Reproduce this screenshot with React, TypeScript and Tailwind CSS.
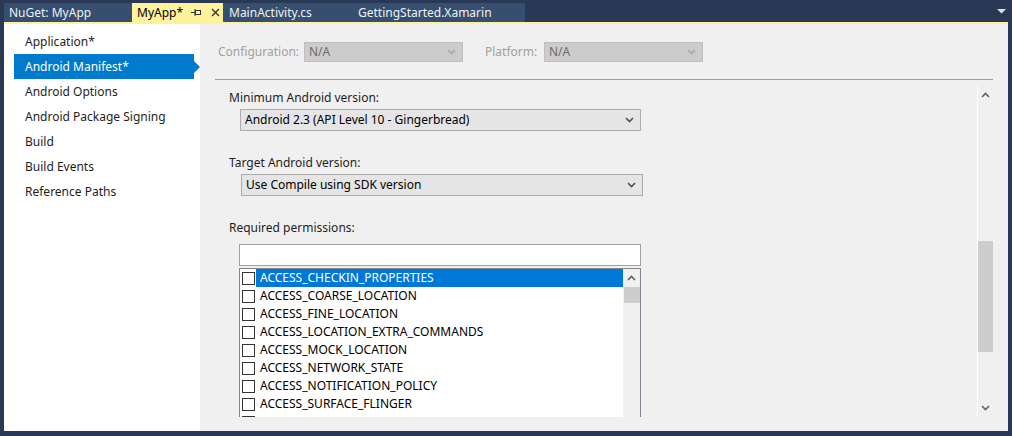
import React from 'react';

const font = { fontFamily: '"Noto Sans", "Liberation Sans", sans-serif' };

const navItems = [
  'Application*',
  'Android Manifest*',
  'Android Options',
  'Android Package Signing',
  'Build',
  'Build Events',
  'Reference Paths',
];

const permissions = [
  'ACCESS_CHECKIN_PROPERTIES',
  'ACCESS_COARSE_LOCATION',
  'ACCESS_FINE_LOCATION',
  'ACCESS_LOCATION_EXTRA_COMMANDS',
  'ACCESS_MOCK_LOCATION',
  'ACCESS_NETWORK_STATE',
  'ACCESS_NOTIFICATION_POLICY',
  'ACCESS_SURFACE_FLINGER',
];

function Chevron({ up = false, color = '#606060' }: { up?: boolean; color?: string }) {
  return (
    <svg width="9" height="6" viewBox="0 0 9 6">
      <path
        d={up ? 'M1 5 L4.5 1.5 L8 5' : 'M1 1 L4.5 4.5 L8 1'}
        fill="none"
        stroke={color}
        strokeWidth="1.6"
      />
    </svg>
  );
}

function Combo({ value, disabled, className }: { value: string; disabled?: boolean; className: string }) {
  return (
    <div
      className={`flex items-center justify-between border pl-[4px] pr-[6px] text-[12px] ${
        disabled ? 'bg-[#cccccc] border-[#bfbfbf] text-[#6d6d6d]' : 'bg-[#e5e5e5] border-[#acacac] text-[#000000]'
      } ${className}`}
    >
      <span>{value}</span>
      <Chevron color={disabled ? '#a8a8a8' : '#505050'} />
    </div>
  );
}

function Tabs() {
  return (
    <div className="h-[22px] flex items-end pl-[4px] pr-[4px] text-[12px]">
      <div className="h-[19px] w-[128px] bg-[#364e6f] text-[#f1f1f1] pl-[5px] leading-[19px]">NuGet: MyApp</div>
      <div className="h-[19px] w-[91px] bg-[#fff29d] text-[#000000] pl-[5px] flex items-center">
        <span className="leading-[19px]">MyApp*</span>
        <svg width="11" height="9" viewBox="0 0 11 9" className="ml-[8px]">
          <path d="M0 4.5 H4 M4 1 V8" stroke="#333" strokeWidth="1" fill="none" />
          <rect x="4.5" y="2.5" width="5" height="4" fill="none" stroke="#333" strokeWidth="1" />
        </svg>
        <svg width="9" height="9" viewBox="0 0 9 9" className="ml-[9px]">
          <path d="M1 1 L8 8 M8 1 L1 8" stroke="#333" strokeWidth="1.3" />
        </svg>
      </div>
      <div className="h-[19px] w-[130px] bg-[#364e6f] text-[#f1f1f1] pl-[6px] leading-[19px]">MainActivity.cs</div>
      <div className="h-[19px] w-[172px] bg-[#364e6f] text-[#f1f1f1] pl-[5px] leading-[19px]">GettingStarted.Xamarin</div>
      <div className="flex-1" />
      <svg width="9" height="5" viewBox="0 0 9 5" className="mb-[8px] mr-[2px]">
        <path d="M0 0 H9 L4.5 4.5 Z" fill="#e0e0e0" />
      </svg>
    </div>
  );
}

function Sidebar() {
  return (
    <div className="w-[196px] bg-white pt-[5px] text-[12px] text-[#1e1e1e]">
      {navItems.map((item, i) =>
        i === 1 ? (
          <div key={item} className="h-[25px] ml-[10px] flex items-center">
            <div className="w-[180px] h-[25px] bg-[#007acc] text-white pl-[11px] leading-[25px]">{item}</div>
            <svg width="6" height="12" viewBox="0 0 6 12">
              <path d="M0 0 L6 6 L0 12 Z" fill="#007acc" />
            </svg>
          </div>
        ) : (
          <div key={item} className="h-[25px] pl-[21px] leading-[25px]">
            {item}
          </div>
        )
      )}
    </div>
  );
}

function PermissionList() {
  return (
    <div className="ml-[10px] mt-[2px] w-[402px] h-[170px] border border-[#828790] bg-white flex">
      <div className="flex-1 pl-[2px]">
        {permissions.map((p, i) => (
          <div key={p} className="h-[18px] flex items-center">
            <div className="w-[13px] h-[13px] border border-[#333333] bg-white" />
            <div
              className={`flex-1 h-[18px] pl-[4px] leading-[17px] ml-[1px] text-[12px] ${
                i === 0 ? 'bg-[#0078d7] text-white' : 'text-[#000000]'
              }`}
            >
              {p}
            </div>
          </div>
        ))}
        <div className="h-[18px] flex items-start pt-[3px]">
          <div className="w-[13px] h-[13px] border border-[#333333] bg-white" />
        </div>
      </div>
      <div className="w-[17px] bg-[#f0f0f0] flex flex-col items-center">
        <div className="h-[18px] flex items-center">
          <Chevron up />
        </div>
        <div className="w-[16px] h-[16px] bg-[#cdcdcd]" />
      </div>
    </div>
  );
}

function ScrollBar() {
  return (
    <div className="w-[16px] border-l border-white flex flex-col items-center">
      <div className="h-[18px] flex items-center">
        <Chevron up />
      </div>
      <div className="w-[15px] h-[111px] mt-[137px] bg-[#cdcdcd]" />
      <div className="flex-1" />
      <div className="h-[18px] flex items-center">
        <Chevron />
      </div>
    </div>
  );
}

export default function App() {
  return (
    <div className="w-[1012px] h-[436px] bg-[#293955] flex flex-col overflow-hidden" style={font}>
      <Tabs />
      <div className="mx-[4px] h-[409px] border-t-2 border-[#fff29d] flex">
        <Sidebar />
        <div className="flex-1 bg-[#f0f0f0] flex flex-col">
          <div className="pt-[18px] pl-[18px] flex items-center text-[12px] text-[#a0a0a0]">
            <span className="w-[86px]">Configuration:</span>
            <Combo value="N/A" disabled className="w-[159px] h-[20px]" />
            <span className="ml-[22px] w-[59px]">Platform:</span>
            <Combo value="N/A" disabled className="w-[159px] h-[20px]" />
          </div>
          <div className="mt-[17px] mx-[15px] h-px bg-[#a0a0a0]" />
          <div className="mt-[6px] h-[331px] flex mr-[15px]">
            <div className="flex-1 overflow-hidden pl-[29px] pt-[4px] text-[12px] text-[#1e1e1e]">
              <div className="h-[16px] leading-[16px]">Minimum Android version:</div>
              <Combo value="Android 2.3 (API Level 10 - Gingerbread)" className="mt-[3px] ml-[11px] w-[401px] h-[22px]" />
              <div className="mt-[24px] h-[16px] leading-[16px]">Target Android version:</div>
              <Combo value="Use Compile using SDK version" className="mt-[3px] ml-[12px] w-[402px] h-[22px]" />
              <div className="mt-[24px] h-[16px] leading-[16px]">Required permissions:</div>
              <div className="mt-[8px] ml-[10px] w-[402px] h-[22px] border border-[#a0a0a0] bg-white" />
              <PermissionList />
            </div>
            <ScrollBar />
          </div>
        </div>
      </div>
    </div>
  );
}
